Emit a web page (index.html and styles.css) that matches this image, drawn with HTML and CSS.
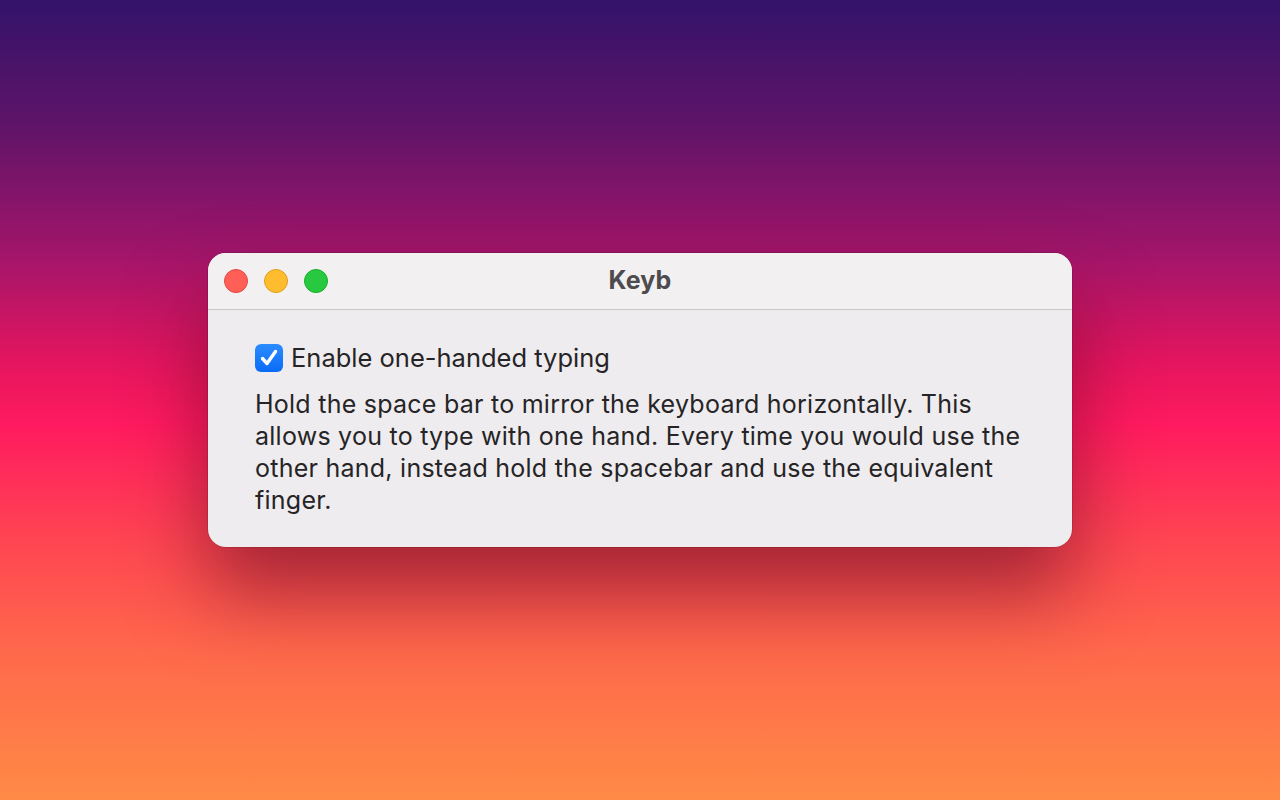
FILE: index.html
```html
<!DOCTYPE html>
<html>
<head>
<meta charset="utf-8">
<link rel="stylesheet" href="styles.css">
</head>
<body>
<div class="desktop">
  <div class="window">
    <div class="titlebar">
      <div class="lights">
        <span class="light close"></span>
        <span class="light min"></span>
        <span class="light max"></span>
      </div>
      <div class="title">Keyb</div>
    </div>
    <div class="content">
      <label class="check-row">
        <span class="checkbox">
          <svg viewBox="0 0 28 28" width="28" height="28"><path d="M7.5 14.5 L12 19.5 L20.5 7.5" fill="none" stroke="#fff" stroke-width="3.4" stroke-linecap="round" stroke-linejoin="round"/></svg>
        </span>
        <span class="check-label">Enable one-handed typing</span>
      </label>
      <p class="desc">Hold the space bar to mirror the keyboard horizontally. This allows you to type with one hand. Every time you would use the other hand, instead hold the spacebar and use the equivalent finger.</p>
    </div>
  </div>
</div>
</body>
</html>
```

FILE: styles.css
```css
html, body {
  margin: 0;
  padding: 0;
  width: 1280px;
  height: 800px;
  overflow: hidden;
}
.desktop {
  width: 1280px;
  height: 800px;
  background: linear-gradient(180deg, #33136a 0%, #5c1468 15%, #a3156a 32%, #e3155f 45%, #ff1a5f 53%, #ff4652 68%, #ff6a4b 82%, #ff8a46 100%);
  display: flex;
  justify-content: center;
  padding-top: 253px;
  box-sizing: border-box;
  font-family: Inter, "Noto Sans", sans-serif;
}
.window {
  width: 864px;
  height: 294px;
  border-radius: 18px;
  background: #eeecee;
  overflow: hidden;
  box-shadow: 0 45px 80px rgba(90, 10, 30, 0.55), 0 0 0 0.5px rgba(0,0,0,0.25);
  display: flex;
  flex-direction: column;
}
.titlebar {
  height: 56px;
  background: #f2f0f1;
  border-bottom: 1px solid #c9c7c9;
  display: flex;
  align-items: center;
  position: relative;
  flex-shrink: 0;
}
.lights {
  display: flex;
  gap: 16px;
  padding-left: 16px;
}
.light {
  width: 24px;
  height: 24px;
  border-radius: 50%;
  box-sizing: border-box;
}
.close { background: #ff5f57; border: 1px solid #e2463f; }
.min { background: #febc2e; border: 1px solid #e1a116; }
.max { background: #28c840; border: 1px solid #14ae29; }
.title {
  position: absolute;
  left: 0;
  right: 0;
  top: 12px;
  text-align: center;
  font-weight: 700;
  font-size: 25px;
  line-height: 30px;
  color: #4d4b4d;
  pointer-events: none;
  letter-spacing: 0.2px;
}
.content {
  padding: 33px 40px 0 47px;
  color: #262426;
}
.check-row {
  display: flex;
  align-items: center;
  gap: 8px;
}
.checkbox {
  width: 28px;
  height: 28px;
  border-radius: 6px;
  background: linear-gradient(180deg, #2b8cff 0%, #0a6cf5 100%);
  display: flex;
  align-items: center;
  justify-content: center;
}
.check-label {
  font-size: 25.5px;
  line-height: 30px;
}
.desc {
  margin: 15px 0 0 0;
  font-size: 25px;
  line-height: 32px;
  letter-spacing: 0.25px;
  max-width: 772px;
}
```
